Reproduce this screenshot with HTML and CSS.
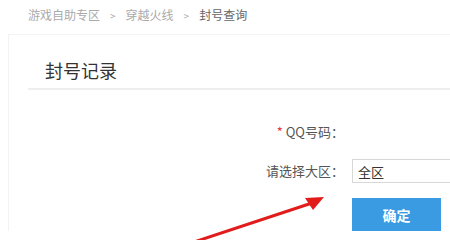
FILE: index.html
```html
<!DOCTYPE html>
<html lang="zh-CN">

<head>
  <meta charset="UTF-8" />
  <meta name="viewport" content="width=device-width, initial-scale=1.0" />
  <title>封号查询</title>
  <link rel="stylesheet" href="styles.css">
</head>

<body>
  <div class="crumbs">
    <span>游戏自助专区</span><span class="sep">&gt;</span><span>穿越火线</span><span class="sep">&gt;</span><span class="current">封号查询</span>
  </div>
  <div class="panel">
    <div class="title">封号记录</div>
    <form class="form">
      <div class="row">
        <label class="label"><span class="star">*</span> QQ号码：</label>
        <div class="field"></div>
      </div>
      <div class="row">
        <label class="label">请选择大区：</label>
        <div class="field"><input class="input" type="text" value="全区" /></div>
      </div>
      <div class="row">
        <span class="label"></span>
        <div class="field"><button type="button" class="btn">确定</button></div>
      </div>
    </form>
  </div>

  <svg class="arrow" width="450" height="240" viewBox="0 0 450 240">
    <line x1="188" y1="244" x2="312" y2="203" stroke="#e21b1b" stroke-width="3" stroke-linecap="round" />
    <polygon points="324,197 305,198 313,210" fill="#e21b1b" />
  </svg>
</body>

</html>
```

FILE: styles.css
```css
body {
  margin: 0;
  background: #fff;
  font-family: "Noto Sans CJK SC", "Microsoft YaHei", sans-serif;
  color: #555;
  overflow: hidden;
  position: relative;
  height: 240px;
}

.crumbs {
  height: 34px;
  line-height: 30px;
  padding-left: 28px;
  font-size: 12px;
  color: #aaa;
}

.crumbs .sep {
  margin: 0 10px;
  font-size: 10px;
}

.crumbs .current {
  color: #666;
}

.panel {
  margin-left: 8px;
  border-top: 1px solid #f3f3f3;
  border-left: 1px solid #f3f3f3;
  padding: 23px 0 0 19px;
}

.title {
  font-size: 18px;
  line-height: 24px;
  color: #333;
  padding: 0 0 6px 17px;
  border-bottom: 2px solid #eee;
}

.form {
  margin-top: 30px;
}

.row {
  display: grid;
  grid-template-columns: 316px 1fr;
  column-gap: 8px;
  align-items: center;
  margin-bottom: 15px;
}

.label {
  text-align: right;
  font-size: 13px;
  line-height: 24px;
  color: #555;
}

.star {
  color: #e4393c;
}

.field {
  min-height: 24px;
  overflow: hidden;
}

.input {
  display: block;
  box-sizing: border-box;
  width: 140px;
  height: 24px;
  border: 1px solid #d8d8d8;
  padding: 0 5px;
  font-family: inherit;
  font-size: 13px;
  color: #333;
  outline: none;
}

.btn {
  display: block;
  width: 89px;
  height: 33px;
  border: none;
  background: #3b9be2;
  color: #fff;
  font-family: inherit;
  font-size: 14px;
  font-weight: bold;
  cursor: pointer;
}

.arrow {
  position: absolute;
  left: 0;
  top: 0;
  pointer-events: none;
}
```
